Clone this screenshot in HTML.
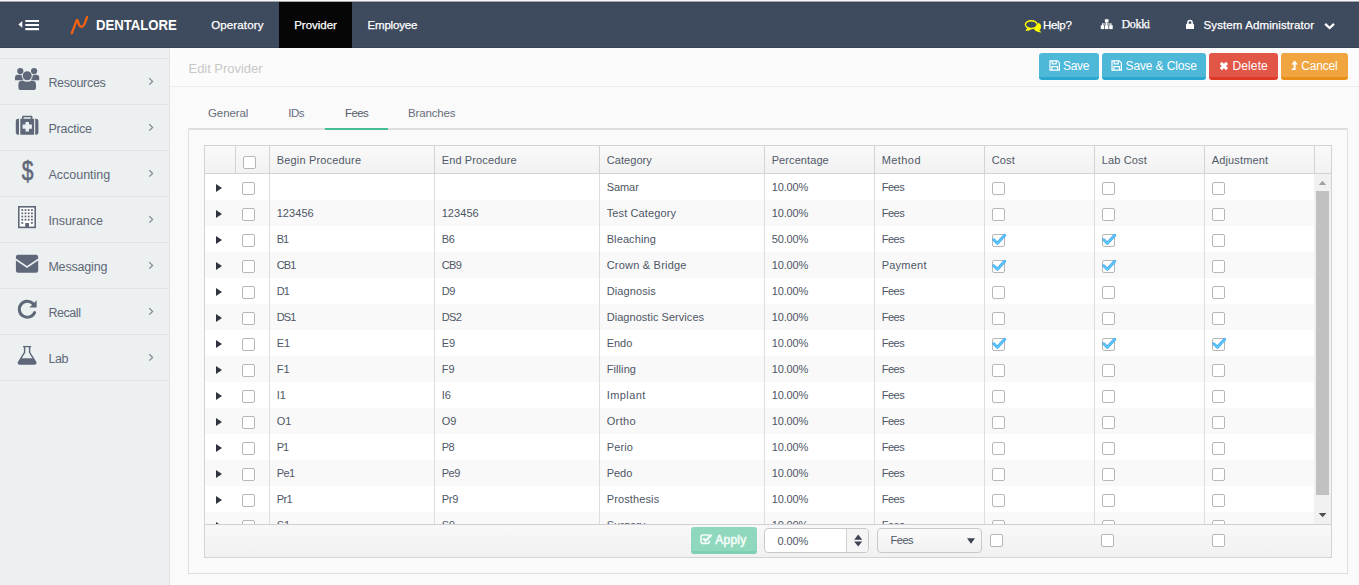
<!DOCTYPE html>
<html lang="en">
<head>
<meta charset="utf-8">
<title>Edit Provider</title>
<style>
*{box-sizing:border-box;margin:0;padding:0}
html,body{width:1359px;height:585px;overflow:hidden}
body{font-family:"Liberation Sans",sans-serif;font-size:11px;color:#4e5665;background:#fafafa;position:relative}
.abs{position:absolute}
svg{position:absolute;overflow:visible}
.tx{position:absolute;white-space:nowrap;line-height:20px}
#topstrip{left:0;top:0;width:1359px;height:2px;background:linear-gradient(#f7f7f7 0,#f7f7f7 50%,#a6a8ad 50%,#a6a8ad 100%)}
#topbar{left:0;top:2px;width:1359px;height:46px;background:#3e4a5d;border-top:1px solid #384459;border-bottom:1px solid #374357}
#provtab{left:279px;top:2px;width:73px;height:46px;background:#060606}
#sidebar{left:0;top:48px;width:170px;height:537px;background:#ecf0f1;border-right:1px solid #e1e5e7}
.sline{position:absolute;left:0;width:169px;height:1px;background:#dfe3e5}
#titlebar{left:170px;top:48px;width:1189px;height:39px;background:#fbfbfb;border-bottom:1px solid #ececec}
.btn{position:absolute;top:53px;height:27px;border-radius:3px;border-bottom:3px solid #000}
#pane{left:188px;top:128px;width:1160px;height:446px;border:1px solid #dfdfdf;border-top:2px solid #dedede;background:#fafafa}
#tabline{left:325px;top:128px;width:63px;height:2px;background:#44be92}
#grid{left:204px;top:145px;width:1128px;height:413px;border:1px solid #d3d3d6;background:#fff}
#ghead{left:205px;top:146px;width:1126px;height:28px;background:linear-gradient(#f9f9f9,#f2f2f2);border-bottom:1px solid #d3d3d6}
.hl{position:absolute;top:146px;width:1px;height:27px;background:#d3d3d6}
#gbody{left:205px;top:174px;width:1109px;height:350px;overflow:hidden;background:#fff}
.row{position:absolute;left:0;width:1109px;height:26px}
.row.alt{background:#f9f9f9}
.c{top:3.2px}
.vl{position:absolute;top:174px;width:1px;height:350px;background:#dedee0}
.cb{position:absolute;width:13px;height:13px;border:1px solid #b7b7b7;border-radius:2px;background:#fff}
.cb .ck{left:-1px;top:-2px}
.arr{position:absolute;left:11px;top:10px;width:0;height:0;border-left:6px solid #30343c;border-top:4px solid transparent;border-bottom:4px solid transparent}
#gfoot{left:205px;top:524px;width:1126px;height:33px;background:linear-gradient(#f8f8f8,#f1f1f1);border-top:1px solid #d0d0d4}
#sb{left:1314px;top:174px;width:17px;height:350px;background:#f1f1f1}
#sbthumb{left:1316px;top:191px;width:13px;height:304px;background:#c1c1c1}
#apply{left:691px;top:527px;width:66px;height:27px;border-radius:3px;background:#8fd8bd;border-bottom:3px solid #7fd0b3}
#pct{left:764px;top:528px;width:105px;height:25px;border:1px solid #c9c9cc;border-radius:4px;background:#fff;overflow:hidden}
#pct i{position:absolute;left:81px;top:0;width:23px;height:23px;background:#f5f5f5;border-left:1px solid #d2d2d5}
#sel{left:877px;top:528px;width:105px;height:25px;border:1px solid #c9c9cc;border-radius:4px;background:linear-gradient(#fafafa,#f1f1f1)}
</style>
</head>
<body>
<div class="abs" id="topstrip"></div>
<div class="abs" id="topbar"></div>
<div class="abs" id="provtab"></div>
<svg id="topicons" style="left:0;top:0" width="1359" height="47" viewBox="0 0 1359 47">
  <path d="M18.4 24.4 L22.3 21 L22.3 27.8 Z" fill="#fff"/>
  <rect x="25.3" y="20" width="13.7" height="2" fill="#fff"/><rect x="25.3" y="24" width="13.7" height="2" fill="#fff"/><rect x="25.3" y="28" width="13.7" height="2.2" fill="#fff"/>
  <path d="M71.7 33.3 L76.6 20.6 Q77.3 19.2 77.9 21 Q79.3 27.4 81.6 26.8 Q84.3 26 85.4 21.5 L87.1 17" fill="none" stroke="#f5620f" stroke-width="2.3" stroke-linecap="round" stroke-linejoin="round"/>
  <!-- help comments -->
  <g fill="none" stroke="#ffff00" stroke-width="1.4">
    <path d="M1034.5 29.2 Q1036 31.2 1039.6 31.6 Q1038.8 30.8 1038.6 29.8 Q1040.6 28.4 1040.4 26.2 Q1040.2 24.4 1038.4 23.4" fill="#ffff00"/>
    <ellipse cx="1031.3" cy="24.6" rx="5.9" ry="3.9"/>
    <path d="M1028.2 27.8 Q1027.8 29.6 1026 30.4 Q1029.4 30.4 1031 28.6" fill="#ffff00"/>
  </g>
  <!-- sitemap -->
  <g fill="#fff">
    <rect x="1104.9" y="19.2" width="3.6" height="3.2"/>
    <rect x="1106.2" y="22" width="1" height="3.4"/>
    <rect x="1102" y="23.5" width="9.4" height="1"/>
    <rect x="1102" y="23.5" width="1" height="2"/><rect x="1110.4" y="23.5" width="1" height="2"/>
    <rect x="1100.8" y="25.2" width="3.5" height="3.9"/><rect x="1105" y="25.2" width="3.4" height="3.9"/><rect x="1109.2" y="25.2" width="3.5" height="3.9"/>
  </g>
  <!-- lock -->
  <path d="M1187.9 24 V22.6 a2.1 2.1 0 0 1 4.2 0 V24" fill="none" stroke="#fff" stroke-width="1.5"/>
  <rect x="1186" y="23.8" width="8" height="5.3" rx="0.7" fill="#fff"/>
  <!-- chevron down -->
  <path d="M1325.2 23.8 L1329.6 28 L1334 23.8" fill="none" stroke="#fff" stroke-width="2.3" stroke-linejoin="miter"/>
</svg>
<div class="abs" id="sidebar"></div>
<div class="sline" style="top:58px"></div><div class="sline" style="top:104px"></div><div class="sline" style="top:150px"></div><div class="sline" style="top:196px"></div><div class="sline" style="top:242px"></div><div class="sline" style="top:288px"></div><div class="sline" style="top:334px"></div><div class="sline" style="top:380px"></div>
<svg id="sideicons" style="left:0;top:47px" width="170" height="340" viewBox="0 47 170 340">
  <g fill="none" stroke="#7d8492" stroke-width="1.2">
    <path d="M149.3 78.2 L152.6 81.4 L149.3 84.6"/><path d="M149.3 124.2 L152.6 127.4 L149.3 130.6"/><path d="M149.3 170.2 L152.6 173.4 L149.3 176.6"/><path d="M149.3 216.2 L152.6 219.4 L149.3 222.6"/><path d="M149.3 262.2 L152.6 265.4 L149.3 268.6"/><path d="M149.3 308.2 L152.6 311.4 L149.3 314.6"/><path d="M149.3 354.2 L152.6 357.4 L149.3 360.6"/>
  </g>
  <!-- users -->
  <g fill="#5f6879">
    <circle cx="20.3" cy="71" r="3.1"/><circle cx="34.1" cy="71" r="3.1"/>
    <path d="M15 80.3 V77.6 Q15 74.8 17.8 74.8 H21.4 Q21.8 78.2 23.6 79.6 Q21.4 80 20.6 80.3 Z"/>
    <path d="M39.2 80.3 V77.6 Q39.2 74.8 36.4 74.8 H33 Q32.6 78.2 30.8 79.6 Q33 80 33.8 80.3 Z"/>
    <circle cx="27.2" cy="75.7" r="4.5"/>
    <path d="M18.4 87.4 V84.6 Q18.4 80.6 22.8 80.6 Q27.2 83 31.6 80.6 Q36 80.6 36 84.6 V87.4 Q36 90 33.2 90 H21.2 Q18.4 90 18.4 87.4 Z"/>
  </g>
  <!-- medkit -->
  <g fill="#5f6879">
    <path d="M19 118.7 H18.2 Q15.8 118.7 15.8 121.1 V132.4 Q15.8 134.8 18.2 134.8 H19 Z"/>
    <path d="M35.2 118.7 H36 Q38.4 118.7 38.4 121.1 V132.4 Q38.4 134.8 36 134.8 H35.2 Z"/>
    <path d="M20.3 118.7 H22 V116.8 Q22 115.8 23 115.8 H31.4 Q32.4 115.8 32.4 116.8 V118.7 H34.1 V134.8 H20.3 Z M23.6 118.7 H30.8 V117.3 H23.6 Z M25.5 122 V124.6 H22.6 V128.8 H25.5 V131.4 H29 V128.8 H31.9 V124.6 H29 V122 Z" fill-rule="evenodd"/>
  </g>
  <!-- building -->
  <g>
    <rect x="18.8" y="206.8" width="16.4" height="20.6" fill="#fdfdfd" stroke="#5f6879" stroke-width="1.6"/>
    <g fill="#5f6879">
      <rect x="21.4" y="209.2" width="1.8" height="1.8"/><rect x="24.6" y="209.2" width="1.8" height="1.8"/><rect x="27.8" y="209.2" width="1.8" height="1.8"/><rect x="31" y="209.2" width="1.8" height="1.8"/>
      <rect x="21.4" y="212.4" width="1.8" height="1.8"/><rect x="24.6" y="212.4" width="1.8" height="1.8"/><rect x="27.8" y="212.4" width="1.8" height="1.8"/><rect x="31" y="212.4" width="1.8" height="1.8"/>
      <rect x="21.4" y="215.6" width="1.8" height="1.8"/><rect x="24.6" y="215.6" width="1.8" height="1.8"/><rect x="27.8" y="215.6" width="1.8" height="1.8"/><rect x="31" y="215.6" width="1.8" height="1.8"/>
      <rect x="21.4" y="218.8" width="1.8" height="1.8"/><rect x="24.6" y="218.8" width="1.8" height="1.8"/><rect x="27.8" y="218.8" width="1.8" height="1.8"/><rect x="31" y="218.8" width="1.8" height="1.8"/>
      <rect x="21.4" y="222" width="1.8" height="1.8"/><rect x="31" y="222" width="1.8" height="1.8"/>
      <rect x="25.2" y="223" width="3.8" height="4.4"/>
    </g>
  </g>
  <!-- envelope -->
  <g fill="#5f6879">
    <path d="M15.9 260.4 L27 268 L38.2 260.4 V270.6 Q38.2 272.8 36 272.8 H18.1 Q15.9 272.8 15.9 270.6 Z"/>
    <path d="M15.9 258.4 V257 Q15.9 254.8 18.1 254.8 H36 Q38.2 254.8 38.2 257 V258.4 L27 266 Z"/>
  </g>
  <!-- repeat -->
  <g>
    <path d="M33 303.6 A8 8 0 1 0 34.6 312.6" fill="none" stroke="#5f6879" stroke-width="3" stroke-linecap="round"/>
    <path d="M36.6 300.2 V307.4 H29.4 Z" fill="#5f6879"/>
  </g>
  <!-- flask -->
  <g>
    <path d="M23 346.6 H31.2" stroke="#5f6879" stroke-width="1.3" fill="none"/>
    <path d="M24.6 347 V352.4 L18.7 361.8 Q17.6 364 20 364 H34.2 Q36.6 364 35.5 361.8 L29.6 352.4 V347" fill="none" stroke="#5f6879" stroke-width="1.4" stroke-linejoin="round"/>
    <path d="M21.2 358.2 H33 L35.5 362 Q36.4 364 34.2 364 H20 Q17.8 364 18.7 362 Z" fill="#5f6879"/>
  </g>
</svg>
<span class="abs" style="left:19.9px;top:154.5px;font-size:27px;line-height:32px;color:#5f6879;-webkit-text-stroke:0.6px #5f6879;transform:scaleX(0.78);transform-origin:50% 50%;font-family:'Liberation Sans',sans-serif">$</span>
<div class="abs" id="titlebar"></div>
<div class="btn" style="left:1039px;width:60px;background:#4eb8d9;border-bottom-color:#2ba8d0"></div>
<div class="btn" style="left:1102px;width:104px;background:#4eb8d9;border-bottom-color:#2ba8d0"></div>
<div class="btn" style="left:1209px;width:69px;background:#e25648;border-bottom-color:#df3a27"></div>
<div class="btn" style="left:1281px;width:67px;background:#f0a540;border-bottom-color:#e78f19"></div>
<svg id="btnicons" style="left:1030px;top:50px" width="329" height="34" viewBox="1030 50 329 34">
  <g id="floppy1" fill="none" stroke="#fff" stroke-width="1.2">
    <path d="M1050 60.9 H1057.4 L1059.4 62.9 V70.1 H1050 Z"/>
    <path d="M1051.9 70 V66.6 H1057.5 V70"/>
    <path d="M1052.2 61 V63.9 H1056.2 V61"/>
  </g>
  <g fill="none" stroke="#fff" stroke-width="1.2">
    <path d="M1112 60.9 H1119.4 L1121.4 62.9 V70.1 H1112 Z"/>
    <path d="M1113.9 70 V66.6 H1119.5 V70"/>
    <path d="M1114.2 61 V63.9 H1118.2 V61"/>
  </g>
  <path d="M1220.8 62.9 L1227 69.1 M1227 62.9 L1220.8 69.1" stroke="#fff" stroke-width="3" fill="none"/>
  <path d="M1294.6 60.6 L1297.8 64.6 H1295.6 V70 H1291.2 L1292.2 68.6 H1293.6 V64.6 H1291.4 Z" fill="#fff"/>
</svg>
<div class="abs" id="pane"></div>
<div class="abs" id="tabline"></div>
<div class="abs" id="grid"></div>
<div class="abs" id="ghead"></div>
<i class="hl" style="left:235px"></i><i class="hl" style="left:269px"></i><i class="hl" style="left:434px"></i><i class="hl" style="left:599px"></i><i class="hl" style="left:764px"></i><i class="hl" style="left:874px"></i><i class="hl" style="left:984px"></i><i class="hl" style="left:1094px"></i><i class="hl" style="left:1204px"></i><i class="hl" style="left:1314px"></i>
<i class="cb" style="left:243px;top:156px"></i>

<div class="abs" id="gbody"><div class="row" style="top:0px"><i class="arr"></i><i class="cb" style="left:37px;top:8px"></i><span id="t0" class="tx c" style="left:401.7px;font-family:'Liberation Sans',sans-serif;font-size:11px;font-weight:400;color:#4e5665;letter-spacing:-0.061px;">Samar</span><span id="t1" class="tx c" style="left:566.7px;font-family:'Liberation Sans',sans-serif;font-size:11px;font-weight:400;color:#4e5665;letter-spacing:-0.119px;">10.00%</span><span id="t2" class="tx c" style="left:676.7px;font-family:'Liberation Sans',sans-serif;font-size:11px;font-weight:400;color:#4e5665;letter-spacing:-0.467px;">Fees</span><i class="cb" style="left:787px;top:8px"></i><i class="cb" style="left:897px;top:8px"></i><i class="cb" style="left:1007px;top:8px"></i></div>
<div class="row alt" style="top:26px"><i class="arr"></i><i class="cb" style="left:37px;top:8px"></i><span id="t3" class="tx c" style="left:71.7px;font-family:'Liberation Sans',sans-serif;font-size:11px;font-weight:400;color:#4e5665;letter-spacing:0.064px;">123456</span><span id="t4" class="tx c" style="left:236.7px;font-family:'Liberation Sans',sans-serif;font-size:11px;font-weight:400;color:#4e5665;letter-spacing:0.064px;">123456</span><span id="t5" class="tx c" style="left:401.7px;font-family:'Liberation Sans',sans-serif;font-size:11px;font-weight:400;color:#4e5665;letter-spacing:0.117px;">Test Category</span><span id="t6" class="tx c" style="left:566.7px;font-family:'Liberation Sans',sans-serif;font-size:11px;font-weight:400;color:#4e5665;letter-spacing:-0.119px;">10.00%</span><span id="t7" class="tx c" style="left:676.7px;font-family:'Liberation Sans',sans-serif;font-size:11px;font-weight:400;color:#4e5665;letter-spacing:-0.467px;">Fees</span><i class="cb" style="left:787px;top:8px"></i><i class="cb" style="left:897px;top:8px"></i><i class="cb" style="left:1007px;top:8px"></i></div>
<div class="row" style="top:52px"><i class="arr"></i><i class="cb" style="left:37px;top:8px"></i><span id="t8" class="tx c" style="left:71.7px;font-family:'Liberation Sans',sans-serif;font-size:11px;font-weight:400;color:#4e5665;letter-spacing:-0.984px;">B1</span><span id="t9" class="tx c" style="left:236.7px;font-family:'Liberation Sans',sans-serif;font-size:11px;font-weight:400;color:#4e5665;letter-spacing:-0.334px;">B6</span><span id="t10" class="tx c" style="left:401.7px;font-family:'Liberation Sans',sans-serif;font-size:11px;font-weight:400;color:#4e5665;letter-spacing:0.097px;">Bleaching</span><span id="t11" class="tx c" style="left:566.7px;font-family:'Liberation Sans',sans-serif;font-size:11px;font-weight:400;color:#4e5665;letter-spacing:-0.119px;">50.00%</span><span id="t12" class="tx c" style="left:676.7px;font-family:'Liberation Sans',sans-serif;font-size:11px;font-weight:400;color:#4e5665;letter-spacing:-0.467px;">Fees</span><i class="cb" style="left:787px;top:8px"><svg class="ck" viewBox="0 0 16 16" width="16" height="16"><path d="M1.7 6.7 L5.4 10.3 L12.7 2.3" fill="none" stroke="#3ba5f2" stroke-width="2.9" stroke-linecap="round" stroke-linejoin="round"/><path d="M1.7 6.7 L5.4 10.3 L12.7 2.3" fill="none" stroke="#63cbfb" stroke-width="1.5" stroke-linecap="round" stroke-linejoin="round"/></svg></i><i class="cb" style="left:897px;top:8px"><svg class="ck" viewBox="0 0 16 16" width="16" height="16"><path d="M1.7 6.7 L5.4 10.3 L12.7 2.3" fill="none" stroke="#3ba5f2" stroke-width="2.9" stroke-linecap="round" stroke-linejoin="round"/><path d="M1.7 6.7 L5.4 10.3 L12.7 2.3" fill="none" stroke="#63cbfb" stroke-width="1.5" stroke-linecap="round" stroke-linejoin="round"/></svg></i><i class="cb" style="left:1007px;top:8px"></i></div>
<div class="row alt" style="top:78px"><i class="arr"></i><i class="cb" style="left:37px;top:8px"></i><span id="t13" class="tx c" style="left:71.7px;font-family:'Liberation Sans',sans-serif;font-size:11px;font-weight:400;color:#4e5665;letter-spacing:-0.802px;">CB1</span><span id="t14" class="tx c" style="left:236.7px;font-family:'Liberation Sans',sans-serif;font-size:11px;font-weight:400;color:#4e5665;letter-spacing:-0.669px;">CB9</span><span id="t15" class="tx c" style="left:401.7px;font-family:'Liberation Sans',sans-serif;font-size:11px;font-weight:400;color:#4e5665;letter-spacing:0.211px;">Crown &amp; Bridge</span><span id="t16" class="tx c" style="left:566.7px;font-family:'Liberation Sans',sans-serif;font-size:11px;font-weight:400;color:#4e5665;letter-spacing:-0.119px;">10.00%</span><span id="t17" class="tx c" style="left:676.7px;font-family:'Liberation Sans',sans-serif;font-size:11px;font-weight:400;color:#4e5665;letter-spacing:0.240px;">Payment</span><i class="cb" style="left:787px;top:8px"><svg class="ck" viewBox="0 0 16 16" width="16" height="16"><path d="M1.7 6.7 L5.4 10.3 L12.7 2.3" fill="none" stroke="#3ba5f2" stroke-width="2.9" stroke-linecap="round" stroke-linejoin="round"/><path d="M1.7 6.7 L5.4 10.3 L12.7 2.3" fill="none" stroke="#63cbfb" stroke-width="1.5" stroke-linecap="round" stroke-linejoin="round"/></svg></i><i class="cb" style="left:897px;top:8px"><svg class="ck" viewBox="0 0 16 16" width="16" height="16"><path d="M1.7 6.7 L5.4 10.3 L12.7 2.3" fill="none" stroke="#3ba5f2" stroke-width="2.9" stroke-linecap="round" stroke-linejoin="round"/><path d="M1.7 6.7 L5.4 10.3 L12.7 2.3" fill="none" stroke="#63cbfb" stroke-width="1.5" stroke-linecap="round" stroke-linejoin="round"/></svg></i><i class="cb" style="left:1007px;top:8px"></i></div>
<div class="row" style="top:104px"><i class="arr"></i><i class="cb" style="left:37px;top:8px"></i><span id="t18" class="tx c" style="left:71.7px;font-family:'Liberation Sans',sans-serif;font-size:11px;font-weight:400;color:#4e5665;letter-spacing:-0.831px;">D1</span><span id="t19" class="tx c" style="left:236.7px;font-family:'Liberation Sans',sans-serif;font-size:11px;font-weight:400;color:#4e5665;letter-spacing:-0.431px;">D9</span><span id="t20" class="tx c" style="left:401.7px;font-family:'Liberation Sans',sans-serif;font-size:11px;font-weight:400;color:#4e5665;letter-spacing:0.099px;">Diagnosis</span><span id="t21" class="tx c" style="left:566.7px;font-family:'Liberation Sans',sans-serif;font-size:11px;font-weight:400;color:#4e5665;letter-spacing:-0.119px;">10.00%</span><span id="t22" class="tx c" style="left:676.7px;font-family:'Liberation Sans',sans-serif;font-size:11px;font-weight:400;color:#4e5665;letter-spacing:-0.467px;">Fees</span><i class="cb" style="left:787px;top:8px"></i><i class="cb" style="left:897px;top:8px"></i><i class="cb" style="left:1007px;top:8px"></i></div>
<div class="row alt" style="top:130px"><i class="arr"></i><i class="cb" style="left:37px;top:8px"></i><span id="t23" class="tx c" style="left:71.7px;font-family:'Liberation Sans',sans-serif;font-size:11px;font-weight:400;color:#4e5665;letter-spacing:-0.802px;">DS1</span><span id="t24" class="tx c" style="left:236.7px;font-family:'Liberation Sans',sans-serif;font-size:11px;font-weight:400;color:#4e5665;letter-spacing:-0.669px;">DS2</span><span id="t25" class="tx c" style="left:401.7px;font-family:'Liberation Sans',sans-serif;font-size:11px;font-weight:400;color:#4e5665;letter-spacing:0.042px;">Diagnostic Services</span><span id="t26" class="tx c" style="left:566.7px;font-family:'Liberation Sans',sans-serif;font-size:11px;font-weight:400;color:#4e5665;letter-spacing:-0.119px;">10.00%</span><span id="t27" class="tx c" style="left:676.7px;font-family:'Liberation Sans',sans-serif;font-size:11px;font-weight:400;color:#4e5665;letter-spacing:-0.467px;">Fees</span><i class="cb" style="left:787px;top:8px"></i><i class="cb" style="left:897px;top:8px"></i><i class="cb" style="left:1007px;top:8px"></i></div>
<div class="row" style="top:156px"><i class="arr"></i><i class="cb" style="left:37px;top:8px"></i><span id="t28" class="tx c" style="left:71.7px;font-family:'Liberation Sans',sans-serif;font-size:11px;font-weight:400;color:#4e5665;letter-spacing:0.05px;">E1</span><span id="t29" class="tx c" style="left:236.7px;font-family:'Liberation Sans',sans-serif;font-size:11px;font-weight:400;color:#4e5665;letter-spacing:0.05px;">E9</span><span id="t30" class="tx c" style="left:401.7px;font-family:'Liberation Sans',sans-serif;font-size:11px;font-weight:400;color:#4e5665;letter-spacing:-0.026px;">Endo</span><span id="t31" class="tx c" style="left:566.7px;font-family:'Liberation Sans',sans-serif;font-size:11px;font-weight:400;color:#4e5665;letter-spacing:-0.119px;">10.00%</span><span id="t32" class="tx c" style="left:676.7px;font-family:'Liberation Sans',sans-serif;font-size:11px;font-weight:400;color:#4e5665;letter-spacing:-0.467px;">Fees</span><i class="cb" style="left:787px;top:8px"><svg class="ck" viewBox="0 0 16 16" width="16" height="16"><path d="M1.7 6.7 L5.4 10.3 L12.7 2.3" fill="none" stroke="#3ba5f2" stroke-width="2.9" stroke-linecap="round" stroke-linejoin="round"/><path d="M1.7 6.7 L5.4 10.3 L12.7 2.3" fill="none" stroke="#63cbfb" stroke-width="1.5" stroke-linecap="round" stroke-linejoin="round"/></svg></i><i class="cb" style="left:897px;top:8px"><svg class="ck" viewBox="0 0 16 16" width="16" height="16"><path d="M1.7 6.7 L5.4 10.3 L12.7 2.3" fill="none" stroke="#3ba5f2" stroke-width="2.9" stroke-linecap="round" stroke-linejoin="round"/><path d="M1.7 6.7 L5.4 10.3 L12.7 2.3" fill="none" stroke="#63cbfb" stroke-width="1.5" stroke-linecap="round" stroke-linejoin="round"/></svg></i><i class="cb" style="left:1007px;top:8px"><svg class="ck" viewBox="0 0 16 16" width="16" height="16"><path d="M1.7 6.7 L5.4 10.3 L12.7 2.3" fill="none" stroke="#3ba5f2" stroke-width="2.9" stroke-linecap="round" stroke-linejoin="round"/><path d="M1.7 6.7 L5.4 10.3 L12.7 2.3" fill="none" stroke="#63cbfb" stroke-width="1.5" stroke-linecap="round" stroke-linejoin="round"/></svg></i></div>
<div class="row alt" style="top:182px"><i class="arr"></i><i class="cb" style="left:37px;top:8px"></i><span id="t33" class="tx c" style="left:71.7px;font-family:'Liberation Sans',sans-serif;font-size:11px;font-weight:400;color:#4e5665;letter-spacing:0.05px;">F1</span><span id="t34" class="tx c" style="left:236.7px;font-family:'Liberation Sans',sans-serif;font-size:11px;font-weight:400;color:#4e5665;letter-spacing:0.05px;">F9</span><span id="t35" class="tx c" style="left:401.7px;font-family:'Liberation Sans',sans-serif;font-size:11px;font-weight:400;color:#4e5665;letter-spacing:0.095px;">Filling</span><span id="t36" class="tx c" style="left:566.7px;font-family:'Liberation Sans',sans-serif;font-size:11px;font-weight:400;color:#4e5665;letter-spacing:-0.119px;">10.00%</span><span id="t37" class="tx c" style="left:676.7px;font-family:'Liberation Sans',sans-serif;font-size:11px;font-weight:400;color:#4e5665;letter-spacing:-0.467px;">Fees</span><i class="cb" style="left:787px;top:8px"></i><i class="cb" style="left:897px;top:8px"></i><i class="cb" style="left:1007px;top:8px"></i></div>
<div class="row" style="top:208px"><i class="arr"></i><i class="cb" style="left:37px;top:8px"></i><span id="t38" class="tx c" style="left:71.7px;font-family:'Liberation Sans',sans-serif;font-size:11px;font-weight:400;color:#4e5665;letter-spacing:0.05px;">I1</span><span id="t39" class="tx c" style="left:236.7px;font-family:'Liberation Sans',sans-serif;font-size:11px;font-weight:400;color:#4e5665;letter-spacing:0.05px;">I6</span><span id="t40" class="tx c" style="left:401.7px;font-family:'Liberation Sans',sans-serif;font-size:11px;font-weight:400;color:#4e5665;letter-spacing:0.417px;">Implant</span><span id="t41" class="tx c" style="left:566.7px;font-family:'Liberation Sans',sans-serif;font-size:11px;font-weight:400;color:#4e5665;letter-spacing:-0.119px;">10.00%</span><span id="t42" class="tx c" style="left:676.7px;font-family:'Liberation Sans',sans-serif;font-size:11px;font-weight:400;color:#4e5665;letter-spacing:-0.467px;">Fees</span><i class="cb" style="left:787px;top:8px"></i><i class="cb" style="left:897px;top:8px"></i><i class="cb" style="left:1007px;top:8px"></i></div>
<div class="row alt" style="top:234px"><i class="arr"></i><i class="cb" style="left:37px;top:8px"></i><span id="t43" class="tx c" style="left:71.7px;font-family:'Liberation Sans',sans-serif;font-size:11px;font-weight:400;color:#4e5665;letter-spacing:0.05px;">O1</span><span id="t44" class="tx c" style="left:236.7px;font-family:'Liberation Sans',sans-serif;font-size:11px;font-weight:400;color:#4e5665;letter-spacing:0.05px;">O9</span><span id="t45" class="tx c" style="left:401.7px;font-family:'Liberation Sans',sans-serif;font-size:11px;font-weight:400;color:#4e5665;letter-spacing:0.377px;">Ortho</span><span id="t46" class="tx c" style="left:566.7px;font-family:'Liberation Sans',sans-serif;font-size:11px;font-weight:400;color:#4e5665;letter-spacing:-0.119px;">10.00%</span><span id="t47" class="tx c" style="left:676.7px;font-family:'Liberation Sans',sans-serif;font-size:11px;font-weight:400;color:#4e5665;letter-spacing:-0.467px;">Fees</span><i class="cb" style="left:787px;top:8px"></i><i class="cb" style="left:897px;top:8px"></i><i class="cb" style="left:1007px;top:8px"></i></div>
<div class="row" style="top:260px"><i class="arr"></i><i class="cb" style="left:37px;top:8px"></i><span id="t48" class="tx c" style="left:71.7px;font-family:'Liberation Sans',sans-serif;font-size:11px;font-weight:400;color:#4e5665;letter-spacing:-0.984px;">P1</span><span id="t49" class="tx c" style="left:236.7px;font-family:'Liberation Sans',sans-serif;font-size:11px;font-weight:400;color:#4e5665;letter-spacing:-0.434px;">P8</span><span id="t50" class="tx c" style="left:401.7px;font-family:'Liberation Sans',sans-serif;font-size:11px;font-weight:400;color:#4e5665;letter-spacing:0.123px;">Perio</span><span id="t51" class="tx c" style="left:566.7px;font-family:'Liberation Sans',sans-serif;font-size:11px;font-weight:400;color:#4e5665;letter-spacing:-0.119px;">10.00%</span><span id="t52" class="tx c" style="left:676.7px;font-family:'Liberation Sans',sans-serif;font-size:11px;font-weight:400;color:#4e5665;letter-spacing:-0.467px;">Fees</span><i class="cb" style="left:787px;top:8px"></i><i class="cb" style="left:897px;top:8px"></i><i class="cb" style="left:1007px;top:8px"></i></div>
<div class="row alt" style="top:286px"><i class="arr"></i><i class="cb" style="left:37px;top:8px"></i><span id="t53" class="tx c" style="left:71.7px;font-family:'Liberation Sans',sans-serif;font-size:11px;font-weight:400;color:#4e5665;letter-spacing:-0.626px;">Pe1</span><span id="t54" class="tx c" style="left:236.7px;font-family:'Liberation Sans',sans-serif;font-size:11px;font-weight:400;color:#4e5665;letter-spacing:-0.493px;">Pe9</span><span id="t55" class="tx c" style="left:401.7px;font-family:'Liberation Sans',sans-serif;font-size:11px;font-weight:400;color:#4e5665;letter-spacing:-0.026px;">Pedo</span><span id="t56" class="tx c" style="left:566.7px;font-family:'Liberation Sans',sans-serif;font-size:11px;font-weight:400;color:#4e5665;letter-spacing:-0.119px;">10.00%</span><span id="t57" class="tx c" style="left:676.7px;font-family:'Liberation Sans',sans-serif;font-size:11px;font-weight:400;color:#4e5665;letter-spacing:-0.467px;">Fees</span><i class="cb" style="left:787px;top:8px"></i><i class="cb" style="left:897px;top:8px"></i><i class="cb" style="left:1007px;top:8px"></i></div>
<div class="row" style="top:312px"><i class="arr"></i><i class="cb" style="left:37px;top:8px"></i><span id="t58" class="tx c" style="left:71.7px;font-family:'Liberation Sans',sans-serif;font-size:11px;font-weight:400;color:#4e5665;letter-spacing:-0.542px;">Pr1</span><span id="t59" class="tx c" style="left:236.7px;font-family:'Liberation Sans',sans-serif;font-size:11px;font-weight:400;color:#4e5665;letter-spacing:-0.275px;">Pr9</span><span id="t60" class="tx c" style="left:401.7px;font-family:'Liberation Sans',sans-serif;font-size:11px;font-weight:400;color:#4e5665;letter-spacing:0.124px;">Prosthesis</span><span id="t61" class="tx c" style="left:566.7px;font-family:'Liberation Sans',sans-serif;font-size:11px;font-weight:400;color:#4e5665;letter-spacing:-0.119px;">10.00%</span><span id="t62" class="tx c" style="left:676.7px;font-family:'Liberation Sans',sans-serif;font-size:11px;font-weight:400;color:#4e5665;letter-spacing:-0.467px;">Fees</span><i class="cb" style="left:787px;top:8px"></i><i class="cb" style="left:897px;top:8px"></i><i class="cb" style="left:1007px;top:8px"></i></div>
<div class="row alt" style="top:338px"><i class="arr"></i><i class="cb" style="left:37px;top:8px"></i><span id="t63" class="tx c" style="left:71.7px;font-family:'Liberation Sans',sans-serif;font-size:11px;font-weight:400;color:#4e5665;letter-spacing:0.05px;">S1</span><span id="t64" class="tx c" style="left:236.7px;font-family:'Liberation Sans',sans-serif;font-size:11px;font-weight:400;color:#4e5665;letter-spacing:0.05px;">S9</span><span id="t65" class="tx c" style="left:401.7px;font-family:'Liberation Sans',sans-serif;font-size:11px;font-weight:400;color:#4e5665;letter-spacing:0.010px;">Surgery</span><span id="t66" class="tx c" style="left:566.7px;font-family:'Liberation Sans',sans-serif;font-size:11px;font-weight:400;color:#4e5665;letter-spacing:-0.119px;">10.00%</span><span id="t67" class="tx c" style="left:676.7px;font-family:'Liberation Sans',sans-serif;font-size:11px;font-weight:400;color:#4e5665;letter-spacing:-0.467px;">Fees</span><i class="cb" style="left:787px;top:8px"></i><i class="cb" style="left:897px;top:8px"></i><i class="cb" style="left:1007px;top:8px"></i></div></div>
<i class="vl" style="left:269px"></i><i class="vl" style="left:434px"></i><i class="vl" style="left:599px"></i><i class="vl" style="left:764px"></i><i class="vl" style="left:874px"></i><i class="vl" style="left:984px"></i><i class="vl" style="left:1094px"></i><i class="vl" style="left:1204px"></i>
<div class="abs" id="sb"></div>
<div class="abs" id="sbthumb"></div>
<svg style="left:1314px;top:174px" width="17" height="350" viewBox="1314 174 17 350">
  <path d="M1318.8 184.9 L1322.5 180.8 L1326.2 184.9 Z" fill="#a0a0a0"/>
  <path d="M1318.8 513 L1322.6 517.3 L1326.4 513 Z" fill="#4f4f4f"/>
</svg>
<div class="abs" id="gfoot"></div>
<div class="abs" id="apply"></div>
<svg style="left:699px;top:532px" width="16" height="14" viewBox="699 532 16 14">
  <path d="M709.4 535 H702.6 Q701 535 701 536.6 V541.8 Q701 543.4 702.6 543.4 H707.8 Q709.4 543.4 709.4 541.8 V540.6" fill="none" stroke="#f6fdfb" stroke-width="1.6"/>
  <path d="M703.2 538.4 L705.6 540.8 L711.6 534.8" fill="none" stroke="#f6fdfb" stroke-width="2.2"/>
</svg>
<div class="abs" id="pct"><i></i></div>
<svg style="left:850px;top:530px" width="16" height="20" viewBox="850 530 16 20">
  <path d="M854.2 539.7 L858.2 534.6 L862.2 539.7 Z" fill="#3d4354"/>
  <path d="M854.2 541.5 L858.2 546.6 L862.2 541.5 Z" fill="#3d4354"/>
</svg>
<div class="abs" id="sel"></div>
<svg style="left:965px;top:536px" width="12" height="10" viewBox="965 536 12 10">
  <path d="M967 538.2 H975 L971 543.8 Z" fill="#3d4354"/>
</svg>
<i class="cb" style="left:990px;top:534px"></i><i class="cb" style="left:1101px;top:534px"></i><i class="cb" style="left:1212px;top:534px"></i>

<span id="t68" class="tx" style="left:96.2px;top:15.15px;font-family:'Liberation Sans',sans-serif;font-size:14px;font-weight:700;color:#fff;transform:scaleX(0.938);transform-origin:0 50%;">DENTALORE</span>
<span id="t69" class="tx" style="left:211.2px;top:15.02px;font-family:'Liberation Sans',sans-serif;font-size:11.5px;font-weight:400;color:#fff;letter-spacing:0.140px;-webkit-text-stroke:0.25px #fff;">Operatory</span>
<span id="t70" class="tx" style="left:294.2px;top:15.02px;font-family:'Liberation Sans',sans-serif;font-size:11.5px;font-weight:400;color:#fff;letter-spacing:-0.016px;-webkit-text-stroke:0.25px #fff;">Provider</span>
<span id="t71" class="tx" style="left:367.5px;top:15.02px;font-family:'Liberation Sans',sans-serif;font-size:11.5px;font-weight:400;color:#fff;letter-spacing:-0.180px;-webkit-text-stroke:0.25px #fff;">Employee</span>
<span id="t72" class="tx" style="left:1043.0px;top:15.02px;font-family:'Liberation Sans',sans-serif;font-size:11.5px;font-weight:400;color:#fff;letter-spacing:-0.312px;-webkit-text-stroke:0.25px #fff;">Help?</span>
<span id="t73" class="tx" style="left:1121.5px;top:13.95px;font-family:'Liberation Serif',serif;font-size:12px;font-weight:400;color:#fff;letter-spacing:-0.340px;-webkit-text-stroke:0.25px #fff;">Dokki</span>
<span id="t74" class="tx" style="left:1203.6px;top:15.02px;font-family:'Liberation Sans',sans-serif;font-size:11.5px;font-weight:400;color:#fff;letter-spacing:0.102px;-webkit-text-stroke:0.25px #fff;">System Administrator</span>
<span id="t75" class="tx" style="left:188.5px;top:58.50px;font-family:'Liberation Sans',sans-serif;font-size:13px;font-weight:400;color:#c8c8c8;letter-spacing:-0.032px;">Edit Provider</span>
<span id="t76" class="tx" style="left:1063.0px;top:55.84px;font-family:'Liberation Sans',sans-serif;font-size:12px;font-weight:400;color:#fff;letter-spacing:-0.340px;">Save</span>
<span id="t77" class="tx" style="left:1125.6px;top:55.84px;font-family:'Liberation Sans',sans-serif;font-size:12px;font-weight:400;color:#fff;letter-spacing:-0.134px;">Save &amp; Close</span>
<span id="t78" class="tx" style="left:1232.5px;top:55.84px;font-family:'Liberation Sans',sans-serif;font-size:12px;font-weight:400;color:#fff;letter-spacing:0.119px;">Delete</span>
<span id="t79" class="tx" style="left:1301.2px;top:55.84px;font-family:'Liberation Sans',sans-serif;font-size:12px;font-weight:400;color:#fff;letter-spacing:-0.160px;">Cancel</span>
<span id="t80" class="tx" style="left:208.0px;top:103.02px;font-family:'Liberation Sans',sans-serif;font-size:11.5px;font-weight:400;color:#666d7a;letter-spacing:-0.103px;">General</span>
<span id="t81" class="tx" style="left:288.2px;top:103.02px;font-family:'Liberation Sans',sans-serif;font-size:11.5px;font-weight:400;color:#666d7a;letter-spacing:-0.417px;">IDs</span>
<span id="t82" class="tx" style="left:345.0px;top:103.02px;font-family:'Liberation Sans',sans-serif;font-size:11.5px;font-weight:400;color:#555c6a;letter-spacing:-0.645px;">Fees</span>
<span id="t83" class="tx" style="left:408.0px;top:103.02px;font-family:'Liberation Sans',sans-serif;font-size:11.5px;font-weight:400;color:#666d7a;letter-spacing:-0.137px;">Branches</span>
<span id="t84" class="tx" style="left:48.4px;top:72.67px;font-family:'Liberation Sans',sans-serif;font-size:12.5px;font-weight:400;color:#606776;letter-spacing:-0.294px;">Resources</span>
<span id="t85" class="tx" style="left:48.4px;top:118.67px;font-family:'Liberation Sans',sans-serif;font-size:12.5px;font-weight:400;color:#606776;letter-spacing:-0.220px;">Practice</span>
<span id="t86" class="tx" style="left:48.4px;top:164.67px;font-family:'Liberation Sans',sans-serif;font-size:12.5px;font-weight:400;color:#606776;letter-spacing:0.004px;">Accounting</span>
<span id="t87" class="tx" style="left:48.4px;top:210.67px;font-family:'Liberation Sans',sans-serif;font-size:12.5px;font-weight:400;color:#606776;letter-spacing:-0.056px;">Insurance</span>
<span id="t88" class="tx" style="left:48.4px;top:256.67px;font-family:'Liberation Sans',sans-serif;font-size:12.5px;font-weight:400;color:#606776;letter-spacing:-0.184px;">Messaging</span>
<span id="t89" class="tx" style="left:48.4px;top:302.67px;font-family:'Liberation Sans',sans-serif;font-size:12.5px;font-weight:400;color:#606776;letter-spacing:-0.442px;">Recall</span>
<span id="t90" class="tx" style="left:48.4px;top:348.67px;font-family:'Liberation Sans',sans-serif;font-size:12.5px;font-weight:400;color:#606776;letter-spacing:-0.453px;">Lab</span>
<span id="t91" class="tx" style="left:276.7px;top:150.19px;font-family:'Liberation Sans',sans-serif;font-size:11px;font-weight:400;color:#515968;letter-spacing:0.170px;">Begin Procedure</span>
<span id="t92" class="tx" style="left:441.7px;top:150.19px;font-family:'Liberation Sans',sans-serif;font-size:11px;font-weight:400;color:#515968;letter-spacing:0.124px;">End Procedure</span>
<span id="t93" class="tx" style="left:606.7px;top:150.19px;font-family:'Liberation Sans',sans-serif;font-size:11px;font-weight:400;color:#515968;letter-spacing:0.070px;">Category</span>
<span id="t94" class="tx" style="left:771.7px;top:150.19px;font-family:'Liberation Sans',sans-serif;font-size:11px;font-weight:400;color:#515968;letter-spacing:0.083px;">Percentage</span>
<span id="t95" class="tx" style="left:881.7px;top:150.19px;font-family:'Liberation Sans',sans-serif;font-size:11px;font-weight:400;color:#515968;letter-spacing:0.433px;">Method</span>
<span id="t96" class="tx" style="left:991.7px;top:150.19px;font-family:'Liberation Sans',sans-serif;font-size:11px;font-weight:400;color:#515968;letter-spacing:0.15px;">Cost</span>
<span id="t97" class="tx" style="left:1101.7px;top:150.19px;font-family:'Liberation Sans',sans-serif;font-size:11px;font-weight:400;color:#515968;letter-spacing:0.15px;">Lab Cost</span>
<span id="t98" class="tx" style="left:1211.7px;top:150.19px;font-family:'Liberation Sans',sans-serif;font-size:11px;font-weight:400;color:#515968;letter-spacing:0.15px;">Adjustment</span>
<span id="t99" class="tx" style="left:715.2px;top:529.84px;font-family:'Liberation Sans',sans-serif;font-size:12px;font-weight:400;color:#f6fdfb;letter-spacing:0.274px;-webkit-text-stroke:0.5px #f6fdfb;">Apply</span>
<span id="t100" class="tx" style="left:777.5px;top:531.19px;font-family:'Liberation Sans',sans-serif;font-size:11px;font-weight:400;color:#4e5665;letter-spacing:-0.101px;">0.00%</span>
<span id="t101" class="tx" style="left:890.6px;top:530.39px;font-family:'Liberation Sans',sans-serif;font-size:11px;font-weight:400;color:#4e5665;letter-spacing:-0.517px;">Fees</span>
</body>
</html>
